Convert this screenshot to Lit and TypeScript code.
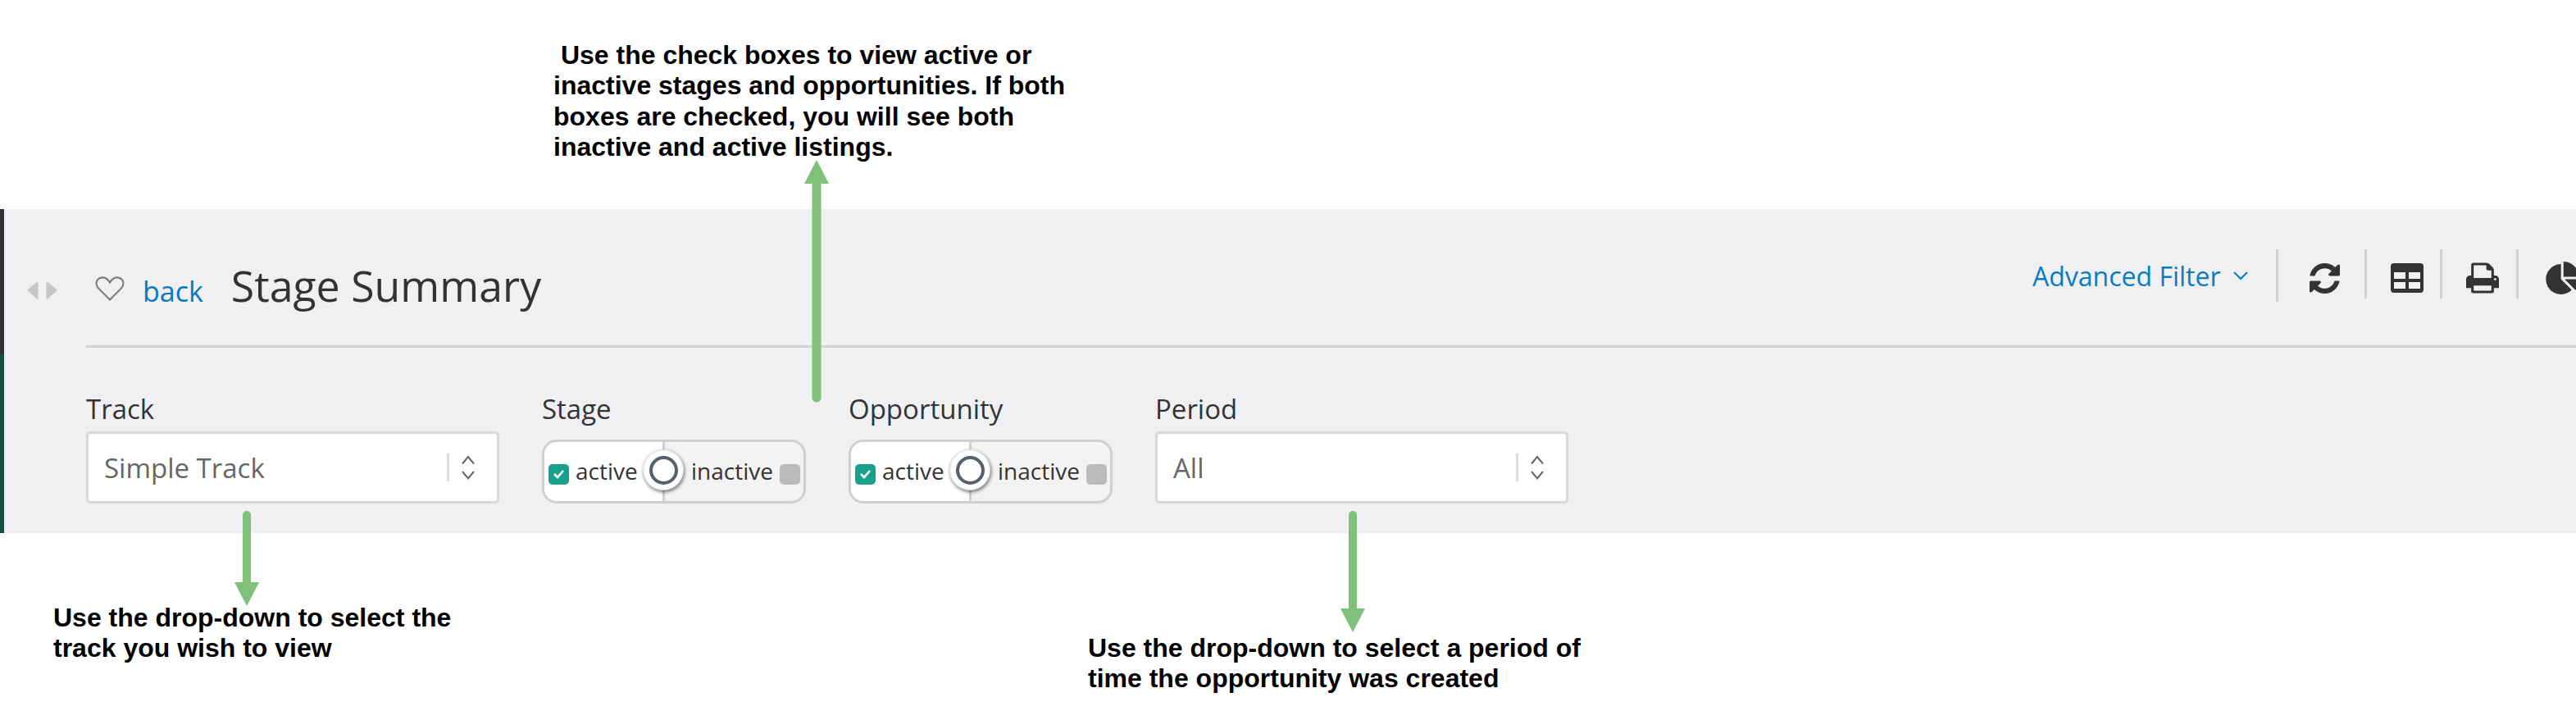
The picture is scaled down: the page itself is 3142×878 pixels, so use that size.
import { LitElement, html, css, svg } from "lit";
import { customElement } from "lit/decorators.js";

const chev = html`<svg class="updown" viewBox="0 0 18 30" width="18" height="30"><path d="M2 10.5 9 2l7 8.5M2 20l7 8.5 7-8.5" fill="none" stroke="#666" stroke-width="2"/></svg>`;

@customElement("app-root")
export class AppRoot extends LitElement {
  static styles = css`
    :host { display: block; position: relative; width: 3142px; height: 878px; overflow: hidden; background: #fff; padding-top: 255px; box-sizing: border-box; font-family: "Open Sans", sans-serif; color: #333; }
    .panel { display: flex; height: 395px; background: #f0f0f2; }
    .bar { width: 5px; flex: none; display: flex; flex-direction: column; }
    .bar i { display: block; }
    .bar .a { height: 177px; background: #2f2f37; }
    .bar .b { flex: 1; background: #134e40; }
    .rail { width: 100px; flex: none; box-sizing: border-box; padding: 88px 0 0 28px; display: flex; gap: 9px; align-items: flex-start; }
    .main { flex: 1; min-width: 0; }
    .head { height: 169px; box-sizing: border-box; border-bottom: 3px solid #d2d2d4; display: flex; justify-content: space-between; }
    .titlegroup { display: flex; align-items: baseline; padding: 59px 0 0 11px; height: 70px; }
    .heart { align-self: flex-start; margin-top: 23px; margin-right: 22px; }
    .back { font-size: 34px; color: #0a78c2; line-height: 46px; margin-right: 34px; }
    h1 { margin: 0; font-weight: 400; font-size: 51.8px; line-height: 68px; color: #333; }
    .tools { display: flex; align-items: flex-start; padding-top: 49px; margin-right: -22px; flex: none; }
    .adv { display: flex; align-items: center; font-size: 32px; color: #0a7cc4; line-height: 64px; height: 64px; gap: 15px; width: 300px; box-sizing: border-box; border-right: 3px solid #d2d2d4; }
    .adv span { position: relative; top: 1px; }
    .tool { height: 60px; padding-top: 10px; border-right: 3px solid #d2d2d4; box-sizing: border-box; display: flex; align-items: center; justify-content: center; }
    .t1 { width: 108px; padding-left: 8px; }
    .t2 { width: 92px; padding-left: 8px; }
    .t3 { width: 93px; padding-left: 8px; }
    .t4 { width: 92px; border: none; justify-content: flex-start; padding-left: 32px; }
    .filters { display: flex; gap: 52px; padding-top: 51px; }
    label { display: block; font-size: 33px; line-height: 48px; height: 51px; color: #333; }
    .select { width: 504px; height: 88px; box-sizing: border-box; background: #fff; border: 3px solid #d8d8da; border-radius: 5px; display: flex; align-items: center; padding: 0 26px 0 19px; font-size: 33px; color: #666; }
    .select span { flex: 1; }
    .select b { display: block; width: 3px; height: 34px; background: #dcdcdc; margin-right: 14px; }
    .toggle { position: relative; width: 322px; height: 78px; margin-top: 10px; box-sizing: border-box; border: 3px solid #cfcfcf; border-radius: 18px; background: #f3f3f3; display: flex; overflow: visible; }
    .side { display: flex; align-items: center; font-size: 28px; box-sizing: border-box; color: #333; }
    .on { width: 147px; background: #fff; border-right: 3px solid #cfcfcf; border-radius: 15px 0 0 15px; padding-left: 5px; gap: 8px; }
    .off { flex: 1; padding-left: 32px; gap: 8px; }
    .box { width: 25px; height: 25px; border-radius: 5px; flex: none; display: flex; align-items: center; justify-content: center; position: relative; top: 3px; }
    .side span { position: relative; top: -1px; }
    .box.teal { background: #17a08c; }
    .box.grey { background: #bbb; }
    .knob { position: absolute; left: 120px; top: 9px; width: 50px; height: 50px; box-sizing: border-box; border-radius: 50%; background: #fff; box-shadow: 1px 2px 4px rgba(0,0,0,.55), inset 0 0 3px rgba(0,0,0,.25); display: flex; align-items: center; justify-content: center; }
    .knob i { display: block; width: 35px; height: 35px; box-sizing: border-box; border: 4px solid #566068; border-radius: 50%; background: #fff; }
    .note { position: absolute; margin: 0; font: 700 32px/37.3px "Liberation Sans", Arial, sans-serif; color: #000; white-space: pre; }
    .n1 { left: 675px; top: 49px; }
    .n2 { left: 65px; top: 735px; }
    .n3 { left: 1327px; top: 772px; }
    .arrows { position: absolute; left: 0; top: 0; pointer-events: none; }
  `;

  toggle() {
    return html`<div class="toggle">
      <div class="side on"><div class="box teal"><svg width="15" height="12" viewBox="0 0 15 12"><path d="M2 6l4 4 7-8" fill="none" stroke="#fff" stroke-width="2.6"/></svg></div><span>active</span></div>
      <div class="side off"><span>inactive</span><div class="box grey"></div></div>
      <div class="knob"><i></i></div>
    </div>`;
  }

  render() {
    return html`
      <div class="panel">
        <div class="bar"><i class="a"></i><i class="b"></i></div>
        <div class="rail">
          <svg width="14" height="22" viewBox="0 0 14 22"><path d="M12.5 1.5v19L1.5 11z" fill="#c6c6c8" stroke="#c6c6c8" stroke-width="2" stroke-linejoin="round"/></svg>
          <svg width="14" height="22" viewBox="0 0 14 22"><path d="M1.5 1.5v19L12.5 11z" fill="#c6c6c8" stroke="#c6c6c8" stroke-width="2" stroke-linejoin="round"/></svg>
        </div>
        <div class="main">
          <div class="head">
            <div class="titlegroup">
              <svg class="heart" width="36" height="30" viewBox="0 0 36 30"><path d="M18 28.5 4 14.5C0 10 1 4 6 2c4.500-1.600 9 .5 12 5.500C21 2.500 25.500.400 30 2c5 2 6 8 2 12.500z" fill="none" stroke="#7b7b7b" stroke-width="2"/></svg>
              <span class="back">back</span>
              <h1>Stage Summary</h1>
            </div>
            <div class="tools">
              <div class="adv"><span>Advanced Filter</span><svg width="18" height="11" viewBox="0 0 18 11"><path d="M1 1l8 8 8-8" fill="none" stroke="#0a7cc4" stroke-width="2.200"/></svg></div>
              <div class="tool t1"><svg width="37" height="37" viewBox="128 128 1536 1536"><path fill="#333" d="M1639 1056q0 5-1 7-64 268-268 434.500t-478 166.500q-146 0-282.500-55t-243.500-157l-129 129q-19 19-45 19t-45-19-19-45v-448q0-26 19-45t45-19h448q26 0 45 19t19 45-19 45l-137 137q71 66 161 102t187 36q134 0 250-65t186-179q11-17 53-117 8-23 30-23h192q13 0 22.500 9.500t9.500 22.500zm25-800v448q0 26-19 45t-45 19h-448q-26 0-45-19t-19-45 19-45l138-138q-148-137-349-137-134 0-250 65t-186 179q-11 17-53 117-8 23-30 23h-199q-13 0-22.500-9.500t-9.500-22.500v-7q65-268 270-434.500t480-166.500q146 0 284 55.500t245 156.500l130-129q19-19 45-19t45 19 19 45z"/></svg></div>
              <div class="tool t2"><svg width="40" height="36" viewBox="0 0 40 36"><path fill="#333" fill-rule="evenodd" d="M4 0h32a4 4 0 0 1 4 4v28a4 4 0 0 1-4 4H4a4 4 0 0 1-4-4V4a4 4 0 0 1 4-4zM4 11v8h14v-8zM22 11v8h14v-8zM4 23v8h14v-8zM22 23v8h14v-8z"/></svg></div>
              <div class="tool t3"><svg width="40" height="40" viewBox="64 128 1664 1536"><path fill="#333" d="M448 1536h896v-256h-896v256zm0-640h896v-384h-160q-40 0-68-28t-28-68v-160h-640v640zm1152 64q0-26-19-45t-45-19-45 19-19 45 19 45 45 19 45-19 19-45zm128 0v416q0 13-9.500 22.500t-22.500 9.500h-224v160q0 40-28 68t-68 28h-960q-40 0-68-28t-28-68v-160h-224q-13 0-22.500-9.500t-9.500-22.500v-416q0-79 56.500-135.500t135.500-56.500h64v-544q0-40 28-68t68-28h672q40 0 88 20t76 48l152 152q28 28 48 76t20 88v256h64q79 0 135.500 56.500t56.500 135.500z"/></svg></div>
              <div class="tool t4"><svg width="44" height="40" viewBox="0 0 1728 1664"><path fill="#333" d="M768 890l546 546q-106 108-247.500 168t-298.500 60q-209 0-385.500-103t-279.500-279.500-103-385.500 103-385.500 279.500-279.500 385.500-103v762zm187 6h773q0 157-60 298.500t-168 247.500zm709-128h-768v-768q209 0 385.500 103t279.500 279.500 103 385.500z"/></svg></div>
            </div>
          </div>
          <div class="filters">
            <div class="field"><label>Track</label><div class="select"><span>Simple Track</span><b></b>${chev}</div></div>
            <div class="field"><label>Stage</label>${this.toggle()}</div>
            <div class="field"><label>Opportunity</label>${this.toggle()}</div>
            <div class="field"><label>Period</label><div class="select"><span>All</span><b></b>${chev}</div></div>
          </div>
        </div>
      </div>
      <p class="note n1">\u00a0Use the check boxes to view active or
inactive stages and opportunities. If both
boxes are checked, you will see both
inactive and active listings.</p>
      <p class="note n2">Use the drop-down to select the
track you wish to view</p>
      <p class="note n3">Use the drop-down to select a period of
time the opportunity was created</p>
      <svg class="arrows" width="3142" height="878" viewBox="0 0 3142 878">
        ${svg`<g fill="#7fc17b">
          <path d="M996 195 1011 224H1001.500V485a5.500 5.500 0 0 1-11 0V224H981z"/>
          <path d="M301 739 316 710H306V628a5 5 0 0 0-10 0V710H286z"/>
          <path d="M1650 771 1665 742H1655V628a5 5 0 0 0-10 0V742H1635z"/>
        </g>`}
      </svg>
    `;
  }
}
